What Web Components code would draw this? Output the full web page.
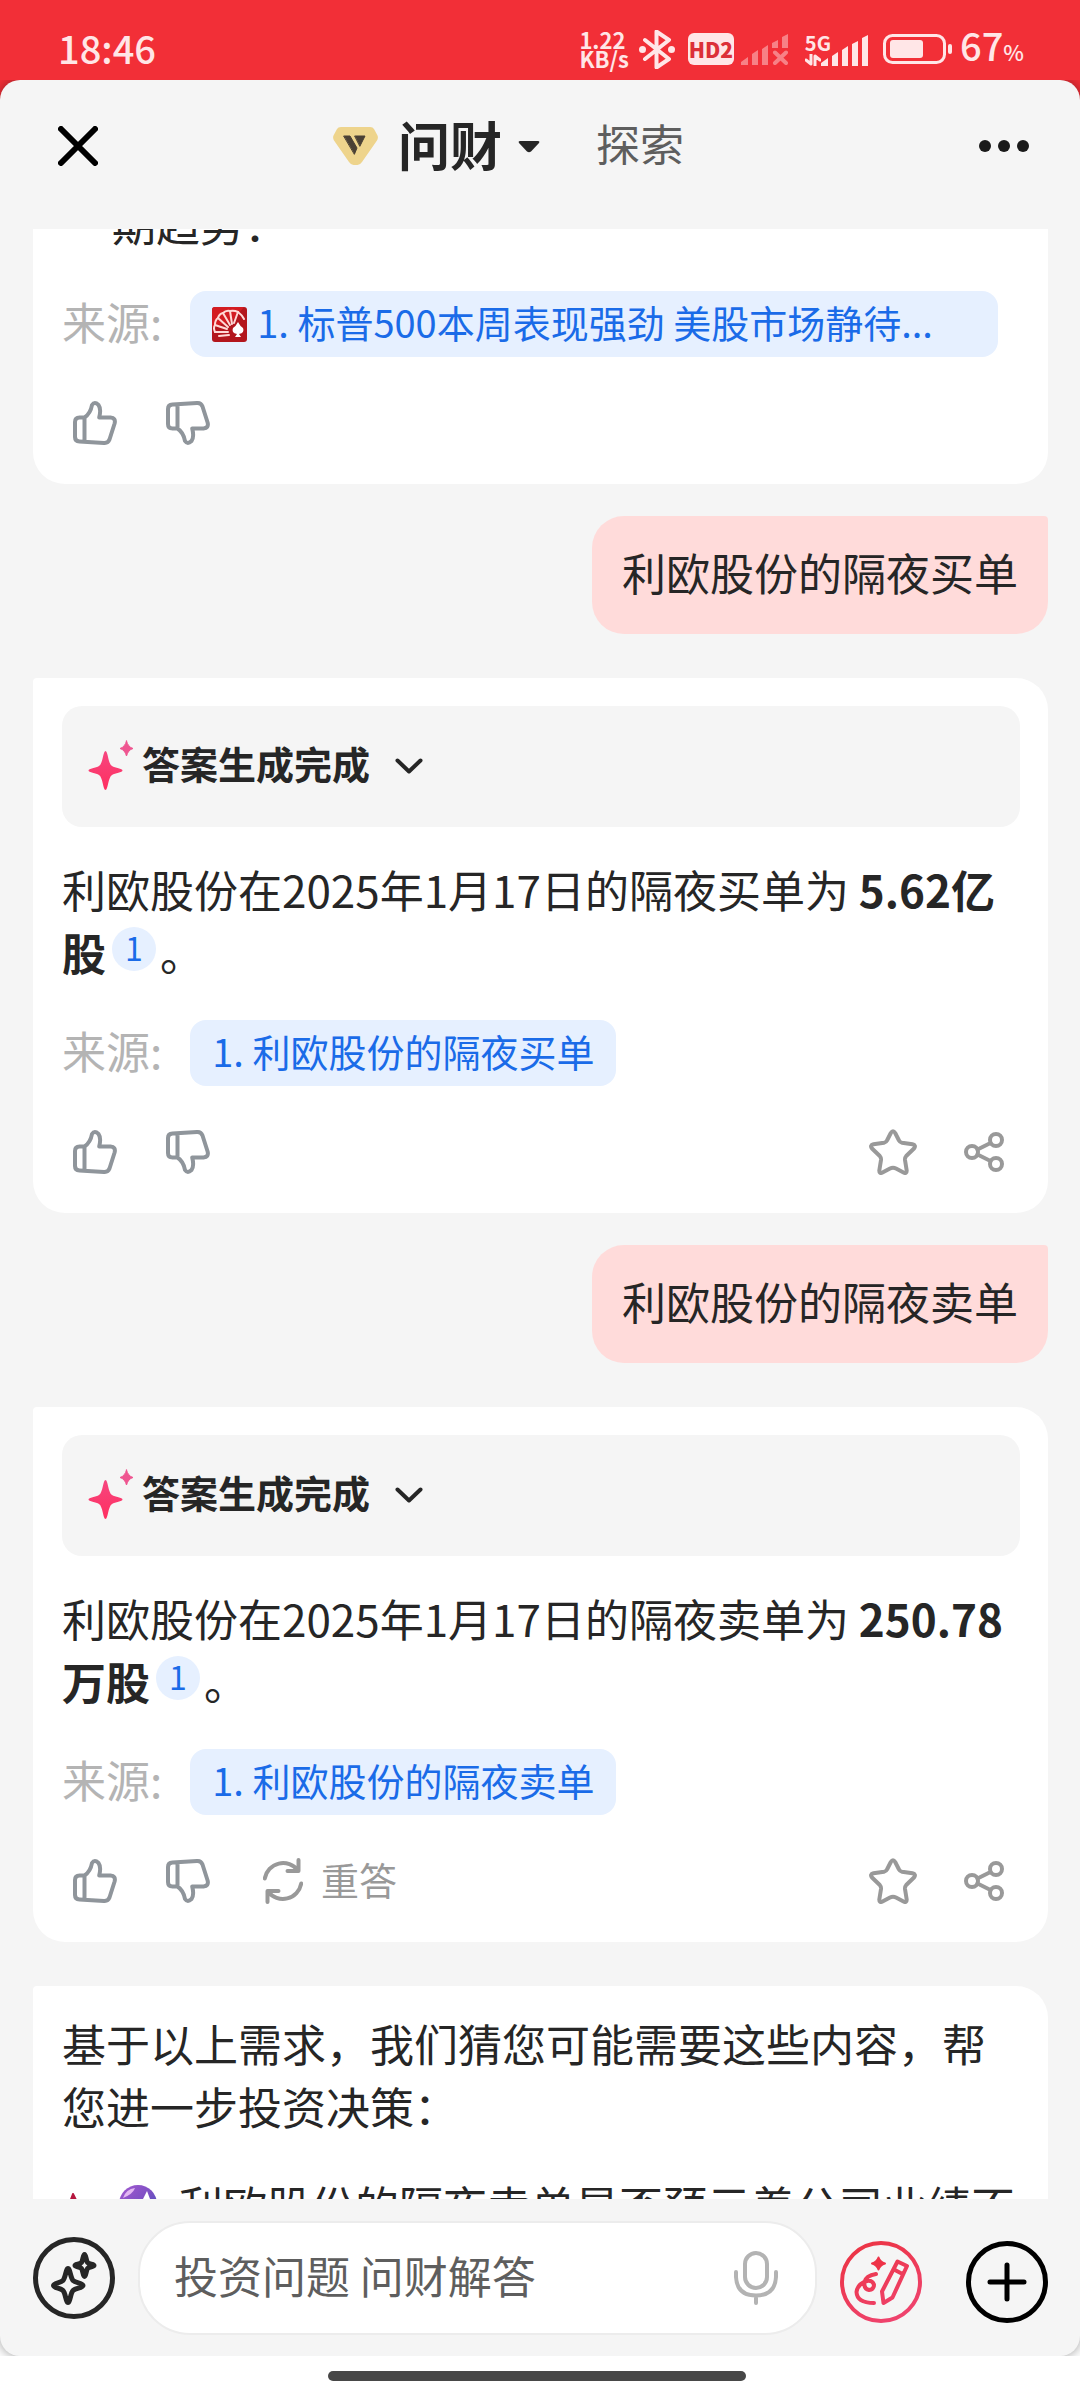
<!DOCTYPE html>
<html lang="zh-CN">
<head>
<meta charset="utf-8">
<meta name="viewport" content="width=device-width, initial-scale=1">
<title>问财</title>
<style>
    html, body {
        margin: 0;
        height: 100%;
    }

    body {
        font-family: "Noto Sans CJK SC", "Noto Sans", sans-serif;
        font-size: 44px;
        line-height: 63px;
        color: #262626;
        background: #fff;
    }
</style>
</head>
<body>

<chat-app>
    <status-bar slot="status" time="18:46" battery="67"></status-bar>
    <chat-header slot="header"></chat-header>

    <answer-card continued>
        <p class="indent">期趋势：</p>
        <source-link slot="source" wide favicon>1. 标普500本周表现强劲 美股市场静待...</source-link>
        <answer-actions slot="actions"></answer-actions>
    </answer-card>

    <user-message>利欧股份的隔夜买单</user-message>

    <answer-card>
        <answer-status slot="status">答案生成完成</answer-status>
        <p>利欧股份在2025年1月17日的隔夜买单为 <b>5.62亿股</b><cite-mark>1</cite-mark>。</p>
        <source-link slot="source">1. 利欧股份的隔夜买单</source-link>
        <answer-actions slot="actions" share></answer-actions>
    </answer-card>

    <user-message>利欧股份的隔夜卖单</user-message>

    <answer-card>
        <answer-status slot="status">答案生成完成</answer-status>
        <p>利欧股份在2025年1月17日的隔夜卖单为 <b>250.78万股</b><cite-mark>1</cite-mark>。</p>
        <source-link slot="source">1. 利欧股份的隔夜卖单</source-link>
        <answer-actions slot="actions" share retry></answer-actions>
    </answer-card>

    <suggestion-card>
        基于以上需求，我们猜您可能需要这些内容，帮您进一步投资决策：
        <span slot="item">利欧股份的隔夜卖单是否预示着公司业绩不</span>
    </suggestion-card>

    <chat-composer slot="composer"></chat-composer>
</chat-app>

<script>
(function() {
    // [width, height, markup]
    const ICONS = {
        close: [40, 40, '<path d="M3 3 37 37M37 3 3 37" stroke-width="6"/>'],
        more: [50, 12, '<g fill="currentColor" stroke="none"><circle cx="6" cy="6" r="6"/><circle cx="25" cy="6" r="6"/><circle cx="44" cy="6" r="6"/></g>'],
        caret: [22, 13, '<path d="M2 1H20Q22 1 21 3L13 11.500Q11 13 9 11.500L1 3Q0 1 2 1Z" fill="currentColor" stroke="none"/>'],
        vip: [45, 38, '<path d="M8 0H37Q40 0 41 2L44.500 8.500Q45.500 11 44 13.500L29 35Q27 38 24.500 38H20.500Q18 38 16 35L1 13.500Q-.5 11 .5 8.500L4 2Q5 0 8 0Z" fill="#eed48c" stroke="none"/><path d="M11 9H17L24 21 21.500 27ZM22 9H32L27 19Z" fill="#4a4034" stroke="#4a4034" stroke-width="1"/>'],
        thumbUp: [44, 44, '<path d="M11.500 16.500H6.500Q2 16.500 2 21V36Q2 40.200 6.500 40.500L31 42Q35 42.200 36.500 38.500L41.600 22.500Q43 17 37.500 16.500H26.200Q28.400 8 25.500 4 21.500 .2 19 4 17.500 12.500 11.500 16.500V40.500"/>'],
        thumbDown: [44, 44, '<path transform="matrix(1 0 0 -1 0 44)" d="M11.500 16.500H6.500Q2 16.500 2 21V36Q2 40.200 6.500 40.500L31 42Q35 42.200 36.500 38.500L41.600 22.500Q43 17 37.500 16.500H26.200Q28.400 8 25.500 4 21.500 .2 19 4 17.500 12.500 11.500 16.500V40.500"/>'],
        retry: [40, 46, '<path d="M1.800 20.500A18.600 18.600 0 0 1 35 12.500M35.500 2V13H24.500M38.200 25.500A18.600 18.600 0 0 1 5 33.500M4.500 44V33H15.500"/>'],
        star: [48, 46, '<path d="M21.800 4Q24 .5 26.200 4L30 11.500Q30.800 13.300 33 13.700L43.500 15.300Q47.500 16.200 45 19.500L37.200 27Q35.800 28.500 36 31L37.700 41.500Q37.800 45.200 34.500 43.500L27 39.500Q24 38 21 39.500L13.500 43.500Q10.200 45.200 10.300 41.500L12 31Q12.200 28.500 10.800 27L3 19.500Q.5 16.200 4.500 15.300L15 13.700Q17.200 13.300 18 11.500Z"/>'],
        share: [40, 40, '<circle cx="8" cy="20" r="6"/><circle cx="32" cy="8" r="6"/><circle cx="32" cy="32" r="6"/><path d="M13.500 17.500 26.500 11M13.500 22.500 26.500 29"/>'],
        chevron: [28, 16, '<path d="M2.500 2.500 14 13.500 25.500 2.500"/>'],
        sparkle: [46, 51, '<defs><linearGradient id="g" x2="0" y2="1"><stop stop-color="#f6467f"/><stop offset="1" stop-color="#ff2f60"/></linearGradient></defs><g stroke="none"><path d="M17.500 11C20 11 20 23.500 24 26 27 28 34.500 28.500 34.500 30.500S27 33 24 35C20 37.500 20 50 17.500 50S15 37.500 11 35C8 33 .5 32.500 .5 30.500S8 28 11 26C15 23.500 15 11 17.500 11Z" fill="url(#g)"/><path d="M38.500 1Q40 7 45 8.500 40 10 38.500 16 37 10 32 8.500 37 7 38.500 1Z" fill="#ef5590" stroke="#ef5590" stroke-width="1"/></g>'],
        favicon: [35, 35, '<rect width="35" height="35" rx="3" fill="#b3161d" stroke="none"/><path d="M0 20V3Q0 0 3 0H32L20 14Z" fill="#d31c22" stroke="none"/><g stroke="#ffd9d6" stroke-width="2"><path d="M16 25 3 25M15 22 3 18M16 20 6 11M18 18 11 6M20 17 18 4M22 16 26 5M17 28 7 29"/><path d="M3 25Q1 21 3 18 3 13 6 11 7 7 11 6 14 3 18 4 22 3 26 5 30 8 32 12"/></g><path d="M26 15Q28 19 31 21 33 26 27 27L29 30H23L25 27Q19 26 21 21 24 19 26 15Z" fill="#fff" stroke="none"/>'],
        bluetooth: [36, 39, '<path d="M6 10 30 29 17.500 37.500V1.500L30 10 6 29"/><g fill="currentColor" stroke="none"><circle cx="3.500" cy="19.500" r="3.500"/><circle cx="32.500" cy="19.500" r="3.500"/></g>'],
        noSignal: [48, 31, '<g fill="currentColor" stroke="none"><path d="M0 31V28L7 23V31ZM11 31V20L17 16V31ZM21 31V15L27 11V31ZM31 14V9L37 6V14ZM41 14V3L47 0V14Z"/></g><path d="M34 18.500 45 29M45 18.500 34 29"/>'],
        signal: [48, 31, '<path d="M0 31V28L7 23V31ZM11 31V21L17 17V31ZM21 31V15L27 11V31ZM31 31V9L37 6V31ZM41 31V3L47 0V31Z" fill="currentColor" stroke="none"/>'],
        traffic: [16, 12, '<path d="M6 0V10L1 6M10 12V2L15 6" stroke-width="3"/>'],
        battery: [69, 30, '<rect x="1.500" y="1.500" width="60" height="27" rx="8" stroke-width="3"/><g fill="currentColor" stroke="none"><rect x="7" y="6" width="33" height="18" rx="3"/><rect x="65" y="10" width="4" height="10" rx="2"/></g>'],
        ai: [82, 82, '<g stroke-width="5"><circle cx="41" cy="41" r="38.500"/><path d="M35 31.500C37 31.500 37.500 41 40 43.500S50 46 50 48.500 42.500 51 40 53.500 37 65.500 35 65.500 32.500 56 30 53.500 20.500 51 20.500 48.500 27.500 46 30 43.500 33 31.500 35 31.500ZM51.500 17.500C53 17.500 53 23.500 54.500 25.500S61 27 61 28.500 56 29.500 54.500 31.500 53 39.500 51.500 39.500 50 33.500 48.500 31.500 42 30 42 28.500 47 27.500 48.500 25.500 50 17.500 51.500 17.500Z"/></g>'],
        write: [82, 82, '<defs><linearGradient id="w" gradientUnits="userSpaceOnUse" x1="20" y1="0" x2="60" y2="82"><stop stop-color="#ec3444"/><stop offset="1" stop-color="#ef4470"/></linearGradient></defs><g stroke="url(#w)"><circle cx="41" cy="41" r="39"/><path d="M57.500 20.500 67 25 52.500 56.500 43.500 62 42 50.500ZM54 28.500 62.500 33M36 33Q26 34.500 24.500 41 23.500 48 29 49 34 48.500 34 43.500 32 39 27 40 17.500 43 16.500 51 17 62 34 62"/></g><path d="M38.500 16.500Q40 21 45 22.500 40 24 38.500 28.500 37 24 32 22.500 37 21 38.500 16.500Z" fill="#ee3348" stroke="#ee3348" stroke-width="2"/>'],
        plus: [82, 82, '<g stroke-width="5"><circle cx="41" cy="41" r="38.500"/><path d="M41 24V58M24 41H58"/></g>'],
        mic: [44, 54, '<rect x="11" y="2" width="22" height="35" rx="11"/><path d="M2 21V26Q3 44.500 22 44.500T42 26V21M22 44.500V52"/>'],
        ball: [38, 42, '<defs><linearGradient id="b" x2="1" y2="1"><stop stop-color="#a45bd0"/><stop offset=".5" stop-color="#7d4fc4"/><stop offset="1" stop-color="#2f55b8"/></linearGradient></defs><g stroke="none"><circle cx="19" cy="19" r="19" fill="url(#b)"/><path d="M4 13Q7 4 16 3 14 9 4 13Z" fill="#e3b8f2"/><path d="M28 6 31 14 36 17 28 18 24 24 24 14Z" fill="#fff"/></g>'],
        pin: [22, 26, '<path d="M10 1 14 9H21L16 15 18 23 11 18 4 23 6 15 1 9H7Z" fill="#b5173f" stroke="#b5173f" stroke-width="2"/>']
    };

    const icon = name => {
        const [w, h, body] = ICONS[name];
        return `<svg width="${w}" height="${h}" viewBox="0 0 ${w} ${h}" fill="none" stroke="currentColor" stroke-width="4" stroke-linecap="round" stroke-linejoin="round" aria-hidden="true">${body}</svg>`;
    };

    // .label lifts the low-sitting CJK glyphs to the middle of a row with icons
    const BASE = `
        *, :host { box-sizing: border-box; }
        svg { display: block; flex: none; }
        button { display: flex; align-items: center; padding: 0; border: 0; background: none; font: inherit; color: inherit; }
        .label { padding-bottom: 6px; }
    `;

    // Every element renders once, from its own template
    function define(name, render) {
        customElements.define(name, class extends HTMLElement {
            constructor() {
                super();
                this.attachShadow({mode: 'open'});
            }

            connectedCallback() {
                const template = document.createElement('template');
                const {css, html} = render(this);
                template.innerHTML = `<style>${BASE}${css}</style>${html}`;
                this.shadowRoot.replaceChildren(template.content.cloneNode(true));
            }
        });
    }

    /*
     *     Shell
     */
    define('chat-app', () => ({
        css: `
            :host { display: flex; flex-direction: column; height: 100vh; background: #f22f37; }
            .backdrop { flex: 1; min-height: 0; display: flex; overflow: hidden; background: linear-gradient(#f22f37 50%, #fff 50%); }
            .sheet { flex: 1; min-width: 0; display: flex; flex-direction: column; background: #f5f5f5; border-radius: 20px; box-shadow: 0 0 12px rgba(0, 0, 0, .4); }
            main { flex: 1; min-height: 0; padding: 0 32px 0 33px; overflow-y: auto; scrollbar-width: none; }
            .home { display: flex; justify-content: center; align-items: center; height: 44px; padding: 0 6px 4px 0; background: #fff; }
            .home i { width: 418px; height: 10px; border-radius: 5px; background: #474747; }
        `,
        html: `
            <slot name="status"></slot>
            <div class="backdrop">
                <div class="sheet">
                    <slot name="header"></slot>
                    <main><slot></slot></main>
                    <slot name="composer"></slot>
                </div>
            </div>
            <div class="home"><i></i></div>
        `
    }));

    define('status-bar', el => ({
        css: `
            :host { display: flex; align-items: center; height: 80px; padding: 18px 56px 0 58px; font-size: 38px; font-weight: 500; line-height: 40px; color: #ffe6e7; }
            time { margin-right: auto; padding-bottom: 3px; }
            .speed { margin-right: 10px; font-size: 22px; font-weight: 700; line-height: 19px; }
            .hd { margin: 0 7px 0 13px; width: 46px; border-radius: 6px; background: #ffe6e7; color: #dc3038; font-size: 21px; font-weight: 900; line-height: 32px; text-align: center; }
            .off { opacity: .45; margin-right: 16px; }
            .cell { display: flex; align-items: flex-end; gap: 4px; margin-right: 14px; }
            .net { margin-right: -14px; font-size: 20px; font-weight: 700; line-height: 20px; }
            .net svg { margin-top: 1px; }
            .level { margin-left: 8px; padding-bottom: 3px; }
            small { font-size: 22px; }
        `,
        html: `
            <time>${el.getAttribute('time')}</time>
            <div class="speed">1.22<br>KB/s</div>
            ${icon('bluetooth')}
            <div class="hd">HD2</div>
            <div class="off">${icon('noSignal')}</div>
            <div class="cell"><div class="net">5G${icon('traffic')}</div>${icon('signal')}</div>
            ${icon('battery')}
            <div class="level">${el.getAttribute('battery')}<small>%</small></div>
        `
    }));

    define('chat-header', () => ({
        css: `
            :host { display: flex; align-items: center; justify-content: space-between; height: 149px; padding: 0 51px 17px 58px; }
            nav { display: flex; align-items: center; padding-right: 60px; }
            .current { font-size: 52px; font-weight: 700; }
            .current svg:first-child { margin-right: 20px; }
            .current svg:last-child { margin-left: 16px; }
            .other { margin-left: 56px; color: #5e5e5e; }
            .close { color: #000; }
            .more { color: #1a1a1a; }
        `,
        html: `
            <button class="close" aria-label="关闭">${icon('close')}</button>
            <nav>
                <button class="current">${icon('vip')}<span class="label">问财</span>${icon('caret')}</button>
                <button class="other"><span class="label">探索</span></button>
            </nav>
            <button class="more" aria-label="更多">${icon('more')}</button>
        `
    }));

    /*
     *     Conversation
     */
    define('user-message', () => ({
        css: `
            :host { display: block; width: fit-content; margin: 32px 0 44px auto; padding: 25px 30px 30px; border-radius: 32px 4px 32px 32px; background: #ffdbda; }
        `,
        html: `<slot></slot>`
    }));

    define('answer-card', () => ({
        css: `
            :host { display: block; padding: 28px 28px 37px 29px; border-radius: 4px 32px 32px 32px; background: #fff; }
            :host([continued]) ::slotted(.indent) { padding-left: 50px; }
            ::slotted(p) { margin: 0; }
            .sources { display: flex; align-items: center; gap: 28px; height: 66px; margin: 36px 22px 42px 0; color: #b4b4b4; }
            .sources span { flex: none; }
        `,
        html: `
            <slot name="status"></slot>
            <slot></slot>
            <div class="sources"><span class="label">来源:</span><slot name="source"></slot></div>
            <slot name="actions"></slot>
        `
    }));

    define('answer-status', () => ({
        css: `
            :host { display: block; margin-bottom: 31px; border-radius: 20px; background: #f5f5f5; font-size: 38px; font-weight: 700; }
            button { width: 100%; height: 121px; padding: 0 26px 2px; }
            .arrow { margin-left: 25px; }
            .label { margin-left: 8px; }
        `,
        html: `<button aria-expanded="false">${icon('sparkle')}<span class="label"><slot></slot></span><span class="arrow">${icon('chevron')}</span></button>`
    }));

    define('cite-mark', () => ({
        css: `
            :host { display: inline-block; height: 44px; margin: 0 4px 0 6px; vertical-align: 10px; line-height: 40px; }
            a { display: block; width: 44px; height: 44px; border-radius: 50%; background: #e6f0ff; color: #1a6be8; font-size: 32px; text-align: center; text-decoration: none; }
        `,
        html: `<a href="#source"><slot></slot></a>`
    }));

    define('source-link', el => ({
        css: `
            :host { display: block; min-width: 0; }
            :host([wide]) { flex: 1; }
            a { display: flex; align-items: center; gap: 10px; height: 66px; padding: 0 22px; border-radius: 16px; background: #e6f0ff; color: #1a6be8; font-size: 38px; text-decoration: none; }
            .label { overflow: hidden; text-overflow: ellipsis; white-space: nowrap; }
        `,
        html: `<a href="#source">${el.hasAttribute('favicon') ? icon('favicon') : ''}<span class="label"><slot></slot></span></a>`
    }));

    define('answer-actions', el => ({
        css: `
            :host { display: flex; align-items: center; height: 48px; padding: 0 16px 0 11px; color: #999; }
            .vote { margin-right: 49px; color: #8f959b; }
            .retry { gap: 18px; margin-left: 4px; font-size: 38px; }
            .right { display: flex; align-items: center; gap: 47px; margin-left: auto; }
        `,
        html: `
            <button class="vote" aria-label="赞">${icon('thumbUp')}</button>
            <button class="vote" aria-label="踩">${icon('thumbDown')}</button>
            ${el.hasAttribute('retry') ? `<button class="retry">${icon('retry')}<span class="label">重答</span></button>` : ''}
            ${el.hasAttribute('share') ? `<div class="right"><button aria-label="收藏">${icon('star')}</button><button aria-label="分享">${icon('share')}</button></div>` : ''}
        `
    }));

    define('suggestion-card', () => ({
        css: `
            :host { display: block; margin-top: 44px; padding: 26px 28px 80px 29px; border-radius: 4px 32px 32px 32px; background: #fff; }
            .item { display: flex; align-items: center; gap: 22px; width: 100%; margin-top: 36px; padding-left: 1px; }
            .item svg:first-child { margin-right: 12px; }
            ::slotted(span) { white-space: nowrap; }
        `,
        html: `
            <slot></slot>
            <button class="item">${icon('pin')}${icon('ball')}<slot name="item"></slot></button>
        `
    }));

    define('chat-composer', () => ({
        css: `
            :host { display: flex; align-items: center; padding: 22px 32px 21px 33px; }
            .field { flex: 1; min-width: 0; display: flex; align-items: center; height: 114px; margin: 0 23px; padding: 0 37px 0 34px; border: 2px solid #ececec; border-radius: 52px; background: #fff; }
            input { flex: 1; min-width: 0; padding: 0 0 6px; border: 0; outline: 0; background: none; font: inherit; color: #262626; }
            input::placeholder { color: #5e5e5e; opacity: 1; }
            .mic { color: #b3b3b3; }
            .tools { display: flex; gap: 44px; margin-top: 8px; color: #000; }
        `,
        html: `
            <button aria-label="智能助手">${icon('ai')}</button>
            <div class="field">
                <input type="text" placeholder="投资问题 问财解答" aria-label="投资问题">
                <button class="mic" aria-label="语音输入">${icon('mic')}</button>
            </div>
            <div class="tools">
                <button aria-label="写作">${icon('write')}</button>
                <button aria-label="添加">${icon('plus')}</button>
            </div>
        `
    }));

    // open part way down the first answer
    document.querySelector('chat-app').shadowRoot.querySelector('main').scrollTop = 65;
})();
</script>
</body>
</html>
